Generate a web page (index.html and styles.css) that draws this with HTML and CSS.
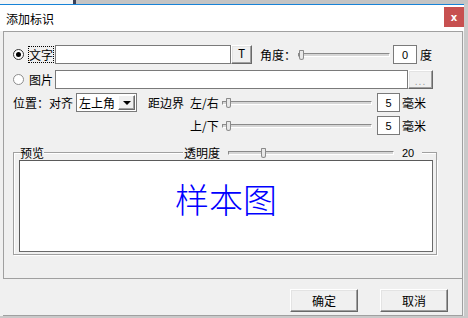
FILE: index.html
```html
<!DOCTYPE html>
<html lang="zh-CN">
<head>
    <meta charset="UTF-8">
    <title>添加标识</title>
    <link rel="stylesheet" href="styles.css">
</head>
<body>
    <div class="desk-top">
        <span class="desk-a"></span>
        <span class="desk-line"></span>
        <span class="desk-b"></span>
    </div>
    <div class="window">
        <div class="titlebar">
            <span class="title">添加标识</span>
            <span class="close">x</span>
        </div>
        <div class="panel">
            <!-- 文字 -->
            <div class="row">
                <span class="radio checked"></span>
                <span class="radio-label focus">文字</span>
                <span class="edit edit-text"></span>
                <span class="btn btn-t">T</span>
                <span class="lbl-angle">角度：</span>
                <div class="slider slider-angle">
                    <span class="track"></span>
                    <span class="thumb" style="left: 1px"></span>
                </div>
                <span class="edit num num-angle">0</span>
                <span class="unit unit-angle">度</span>
            </div>
            <!-- 图片 -->
            <div class="row row-pic">
                <span class="radio"></span>
                <span class="radio-label">图片</span>
                <span class="edit edit-pic"></span>
                <span class="btn btn-dots">...</span>
            </div>
            <!-- 位置 -->
            <div class="row row-pos">
                <span class="lbl-pos">位置：对齐</span>
                <div class="combo">
                    <span class="combo-text">左上角</span>
                    <span class="combo-btn"><span class="arrow"></span></span>
                </div>
                <span class="lbl-margin">距边界</span>
                <span class="lbl-side">左/右</span>
                <div class="slider slider-side">
                    <span class="track"></span>
                    <span class="thumb" style="left: 4px"></span>
                </div>
                <span class="edit num num-side">5</span>
                <span class="unit">毫米</span>
            </div>
            <div class="row row-vert">
                <span class="lbl-side">上/下</span>
                <div class="slider slider-side">
                    <span class="track"></span>
                    <span class="thumb" style="left: 4px"></span>
                </div>
                <span class="edit num num-side">5</span>
                <span class="unit">毫米</span>
            </div>

            <!-- 预览 -->
            <div class="group">
                <div class="group-head">
                    <span class="edge edge-l"></span>
                    <span class="legend">预览</span>
                    <span class="edge edge-mid"></span>
                    <span class="lbl-alpha">透明度</span>
                    <div class="slider slider-alpha">
                        <span class="track"></span>
                        <span class="thumb" style="left: 33px"></span>
                    </div>
                    <span class="alpha-val">20</span>
                    <span class="edge edge-r"></span>
                </div>
                <div class="group-body">
                    <div class="preview">样本图</div>
                </div>
            </div>
        </div>
        <div class="footer">
            <span class="btn btn-dlg">确定</span>
            <span class="btn btn-dlg">取消</span>
        </div>
    </div>
</body>
</html>
```

FILE: styles.css
```css
body {
    margin: 0;
    width: 468px;
    height: 318px;
    overflow: hidden;
    background-color: #c9c9c9;
    font-family: "Noto Sans CJK SC", sans-serif;
    font-size: 12px;
    color: #000;
}

/* escritorio detrás */
.desk-top {
    display: flex;
    height: 4px;
}

.desk-a {
    width: 73px;
    background-color: #f5f5f5;
}

.desk-line {
    width: 3px;
    background-color: #3b4056;
}

.desk-b {
    flex: 1;
    background-color: #c4c4c4;
}

.window {
    width: 464px;
    height: 312px;
    box-sizing: border-box;
    border-top: 1px solid #1883d7;
    background-color: #f0f0f0;
}

.titlebar {
    height: 26px;
    display: flex;
    align-items: center;
    justify-content: space-between;
    background-color: #fff;
}

.title {
    margin-left: 6px;
}

.close {
    align-self: flex-start;
    margin-top: 2px;
    width: 20px;
    height: 20px;
    display: flex;
    align-items: center;
    justify-content: center;
    background-color: #c75050;
    color: #fff;
    font: bold 10px "DejaVu Sans", sans-serif;
}

.panel {
    margin-left: 3px;
    width: 460px;
    height: 248px;
    box-sizing: border-box;
    border: 1px solid #a0a0a0;
    padding-top: 13px;
}

.row {
    display: flex;
    align-items: center;
    height: 19px;
    margin-left: 9px;
}

.row-pic {
    margin-top: 6px;
}

.row-pos {
    margin-top: 4px;
}

.row-vert {
    margin-top: 4px;
    margin-left: 186px;
}

/* controles */
.radio {
    position: relative;
    flex: none;
    width: 11px;
    height: 11px;
    box-sizing: border-box;
    border: 1px solid #8d8d8d;
    border-radius: 50%;
    background-color: #fff;
}

.radio.checked {
    border-color: #333;
}

.radio.checked::after {
    content: "";
    position: absolute;
    left: 2px;
    top: 2px;
    width: 5px;
    height: 5px;
    border-radius: 50%;
    background-color: #000;
}

.radio-label {
    margin-left: 4px;
    width: 26px;
    height: 17px;
    box-sizing: border-box;
    border: 1px dotted transparent;
    display: flex;
    align-items: center;
    justify-content: center;
}

.radio-label.focus {
    border-color: #000;
}

.edit {
    flex: none;
    height: 19px;
    box-sizing: border-box;
    border: 1px solid #7a7a7a;
    background-color: #fff;
}

.edit-text {
    margin-left: 1px;
    width: 176px;
}

.edit-pic {
    margin-left: 1px;
    width: 353px;
}

.num {
    display: flex;
    align-items: center;
    justify-content: center;
    font: 11px "Liberation Sans", sans-serif;
}

.num-angle {
    margin-left: 3px;
    width: 24px;
}

.num-side {
    margin-left: 5px;
    width: 23px;
}

.unit {
    margin-left: 2px;
}

.unit-angle {
    margin-left: 3px;
}

.btn {
    flex: none;
    box-sizing: border-box;
    display: flex;
    align-items: center;
    justify-content: center;
    background-color: #f0f0f0;
    border: 1px solid;
    border-color: #fff #696969 #696969 #fff;
    box-shadow: inset -1px -1px 0 #a0a0a0, inset 1px 1px 0 #e3e3e3;
}

.btn-t {
    width: 21px;
    height: 19px;
    font: 12px "Liberation Mono", monospace;
}

.btn-dots {
    width: 25px;
    height: 19px;
    padding-top: 4px;
    color: #9a9a9a;
    letter-spacing: 1px;
    font: 10px "Liberation Sans", sans-serif;
}

.lbl-angle {
    margin-left: 8px;
    width: 36px;
}

.lbl-pos {
    width: 60px;
}

.lbl-margin {
    margin-left: 11px;
    width: 36px;
}

.lbl-side {
    margin-left: 6px;
    width: 32px;
    flex: none;
}

.row-vert .lbl-side {
    margin-left: 0;
}

/* combo */
.combo {
    margin-left: 3px;
    width: 61px;
    height: 19px;
    box-sizing: border-box;
    border: 1px solid #7a7a7a;
    background-color: #fff;
    display: flex;
    align-items: center;
    justify-content: space-between;
}

.combo-text {
    padding-left: 2px;
}

.combo-btn {
    margin-right: 1px;
    width: 17px;
    height: 15px;
    box-sizing: border-box;
    display: flex;
    align-items: center;
    justify-content: center;
    background-color: #f0f0f0;
    border: 1px solid;
    border-color: #fff #696969 #696969 #fff;
    box-shadow: inset -1px -1px 0 #a0a0a0;
}

.arrow {
    width: 0;
    height: 0;
    border-left: 4px solid transparent;
    border-right: 4px solid transparent;
    border-top: 4px solid #000;
}

/* deslizadores */
.slider {
    position: relative;
    flex: none;
    height: 19px;
    display: flex;
    align-items: center;
}

.slider-angle {
    margin-left: 2px;
    width: 92px;
}

.slider-side {
    margin-left: 0;
    width: 150px;
}

.slider-alpha {
    margin-left: 8px;
    width: 166px;
    height: 13px;
}

.track {
    flex: 1;
    height: 4px;
    box-sizing: border-box;
    border-top: 1px solid #8a8a8a;
    border-left: 1px solid #8a8a8a;
    border-bottom: 1px solid #fff;
    border-right: 1px solid #fff;
    background-color: #d6d6d6;
}

.thumb {
    position: absolute;
    top: 50%;
    width: 5px;
    height: 10px;
    margin-top: -5px;
    box-sizing: border-box;
    border: 1px solid #8a8a8a;
    border-radius: 1px 1px 3px 3px;
    background-color: #e8e8e8;
}

/* grupo */
.group {
    margin-top: 11px;
    margin-left: 9px;
    width: 424px;
}

.group-head {
    display: flex;
    align-items: center;
    height: 13px;
}

.edge {
    align-self: flex-end;
    height: 7px;
    box-sizing: border-box;
    border-top: 1px solid #a0a0a0;
    box-shadow: inset 0 1px 0 #fff;
}

.edge-l {
    width: 7px;
    border-left: 1px solid #a0a0a0;
    box-shadow: inset 1px 1px 0 #fff;
}

.edge-mid {
    flex: 1;
}

.edge-r {
    margin-left: 8px;
    width: 15px;
    border-right: 1px solid #a0a0a0;
}

.legend {
    width: 24px;
}

.lbl-alpha {
    margin-left: 1px;
    width: 36px;
}

.alpha-val {
    margin-left: 8px;
    width: 12px;
    font: 11px "Liberation Sans", sans-serif;
}

.group-body {
    height: 96px;
    box-sizing: border-box;
    border: 1px solid #a0a0a0;
    border-top: none;
    padding: 1px 0 0 5px;
    box-shadow: inset 1px 0 0 #fff, 1px 1px 0 #fff;
}

.preview {
    width: 414px;
    height: 92px;
    box-sizing: border-box;
    border: 1px solid #6a6a6a;
    border-top-color: #5a5a5a;
    border-left-color: #5a5a5a;
    background-color: #fff;
    padding-top: 21px;
    text-align: center;
    color: #0000ff;
    font-size: 34px;
    font-weight: 300;
    line-height: 34px;
}

/* botones del diálogo */
.footer {
    margin-left: 3px;
    width: 460px;
    height: 37px;
    box-sizing: border-box;
    border-right: 1px solid #a0a0a0;
    border-bottom: 1px solid #a0a0a0;
    padding: 10px 14px 0 0;
    display: flex;
    justify-content: flex-end;
    align-items: flex-start;
    gap: 22px;
}

.btn-dlg {
    width: 68px;
    height: 23px;
}
```
